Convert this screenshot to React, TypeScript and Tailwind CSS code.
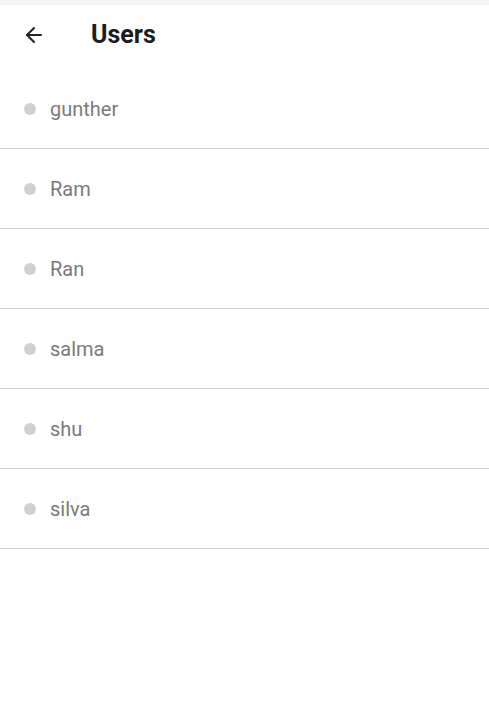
import { ArrowLeft } from 'lucide-react';

const users = ['gunther', 'Ram', 'Ran', 'salma', 'shu', 'silva'];

export default function App() {
  return (
    <div className="w-[489px] h-[724px] bg-white font-['Roboto',sans-serif]">
      {/* Status strip */}
      <div className="h-[5px] bg-[#f4f4f4]" />

      {/* Header */}
      <div className="flex items-center h-[64px] pb-[5px] pl-[22px]">
        <ArrowLeft className="w-6 h-6 text-[#222]" strokeWidth={2} />
        <h1 className="ml-[45px] text-[25px] font-bold text-[#1c1c1c]">Users</h1>
      </div>

      {/* User list */}
      <ul>
        {users.map((name) => (
          <li
            key={name}
            className="flex items-center h-[80px] pl-[24px] border-b border-[#cccccc]"
          >
            <span className="w-[12px] h-[12px] rounded-full bg-[#cfcfcf]" />
            <span className="ml-[14px] text-[20px] text-[#7a7a7a]">{name}</span>
          </li>
        ))}
      </ul>
    </div>
  );
}
